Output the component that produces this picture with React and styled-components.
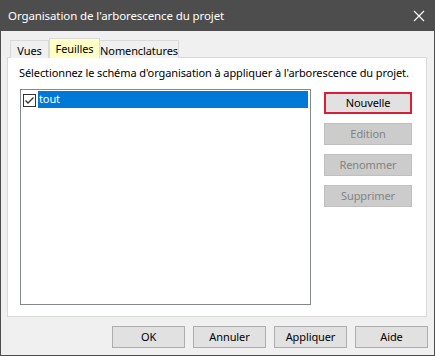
import React from "react";
import styled, { createGlobalStyle } from "styled-components";

const Global = createGlobalStyle`
  html, body { margin: 0; padding: 0; background: #f0f0f0; }
  body { font-family: "Noto Sans", "Open Sans", sans-serif; font-size: 11px; color: #000; letter-spacing: -0.1px; }
  * { box-sizing: border-box; }
`;

const Window = styled.div`
  width: 435px;
  height: 356px;
  display: flex;
  flex-direction: column;
  background: #f0f0f0;
  border: 1px solid #4d4d4d;
  border-top: none;
`;

const TitleBar = styled.div`
  height: 31px;
  flex: none;
  background: #4d4d4d;
  color: #fff;
  display: flex;
  align-items: center;
  justify-content: space-between;
  padding: 0 10px 0 8px;
  margin: 0 -1px;
  font-size: 11.5px;
`;

const CloseIcon = styled.svg`
  width: 12px;
  height: 12px;
  display: block;
`;

const Body = styled.div`
  flex: 1;
  display: flex;
  flex-direction: column;
  padding: 7px 7px 0 6px;
`;

const TabStrip = styled.div`
  display: flex;
  align-items: flex-end;
  height: 20px;
  margin: 0 0 -1px 3px;
  position: relative;
  z-index: 1;
`;

const Tab = styled.div`
  height: ${(p) => (p.$active ? "20px" : "18px")};
  width: ${(p) => p.$w}px;
  border: 1px solid #d9d9d9;
  border-bottom: none;
  border-left-width: ${(p) => (p.$first || p.$active ? 1 : 0)}px;
  background: ${(p) => (p.$active ? "#ffffc6" : "#f0f0f0")};
  display: flex;
  align-items: flex-start;
  justify-content: center;
  padding-top: 2px;
  font-size: 11px;
  line-height: 15px;
  white-space: nowrap;
`;

const Panel = styled.div`
  height: 260px;
  background: #fff;
  border: 1px solid #d9d9d9;
  padding: 7px 0 0 11px;
  display: flex;
  flex-direction: column;
`;

const Hint = styled.div`
  font-size: 11px;
  line-height: 15px;
  white-space: nowrap;
`;

const ListArea = styled.div`
  display: flex;
  gap: 13px;
  margin-top: 9px;
  margin-left: 1px;
`;

const ListBox = styled.div`
  width: 291px;
  height: 216px;
  border: 1px solid #828790;
  background: #fff;
  padding: 1px 2px 0 2px;
`;

const Row = styled.div`
  display: flex;
  align-items: center;
  height: 17px;
  gap: 2px;
`;

const CheckBox = styled.svg`
  width: 13px;
  height: 13px;
  flex: none;
  display: block;
  margin-top: 2px;
`;

const RowLabel = styled.div`
  flex: 1;
  height: 17px;
  background: ${(p) => (p.$selected ? "#0078d7" : "transparent")};
  color: ${(p) => (p.$selected ? "#fff" : "#000")};
  line-height: 16px;
  padding-left: 1px;
`;

const SideButtons = styled.div`
  display: flex;
  flex-direction: column;
  gap: 9px;
  padding-top: 3px;
`;

const Button = styled.button`
  font-family: inherit;
  font-size: 11px;
  letter-spacing: -0.1px;
  width: ${(p) => p.$w || 88}px;
  height: 22px;
  padding: 0;
  margin: 0;
  line-height: 18px;
  background: ${(p) => (p.$disabled ? "#cccccc" : "#e1e1e1")};
  color: ${(p) => (p.$disabled ? "#838383" : "#000")};
  border: ${(p) =>
    p.$default ? "2px solid #dc1e35" : p.$disabled ? "1px solid #bfbfbf" : "1px solid #adadad"};
  cursor: default;
`;

const Footer = styled.div`
  display: flex;
  justify-content: flex-end;
  gap: 8px;
  padding-top: 9px;
  margin-right: -1px;
`;

export default function App() {
  return (
    <>
      <Global />
      <Window>
        <TitleBar>
          <span>Organisation de l'arborescence du projet</span>
          <CloseIcon viewBox="0 0 12 12">
            <path d="M1 1 L11 11 M11 1 L1 11" stroke="#fff" strokeWidth="1.1" />
          </CloseIcon>
        </TitleBar>
        <Body>
          <TabStrip>
            <Tab $first $w={39}>Vues</Tab>
            <Tab $active $w={51}>Feuilles</Tab>
            <Tab $w={79}>Nomenclatures</Tab>
          </TabStrip>
          <Panel>
            <Hint>Sélectionnez le schéma d'organisation à appliquer à l'arborescence du projet.</Hint>
            <ListArea>
              <ListBox>
                <Row>
                  <CheckBox viewBox="0 0 13 13">
                    <rect x="0.5" y="0.5" width="12" height="12" fill="#fff" stroke="#333" />
                    <path d="M2.5 6.5 L5 9 L10.5 3.5" fill="none" stroke="#333" strokeWidth="1.3" />
                  </CheckBox>
                  <RowLabel $selected>tout</RowLabel>
                </Row>
              </ListBox>
              <SideButtons>
                <Button $default>Nouvelle</Button>
                <Button $disabled>Edition</Button>
                <Button $disabled>Renommer</Button>
                <Button $disabled>Supprimer</Button>
              </SideButtons>
            </ListArea>
          </Panel>
          <Footer>
            <Button $w={73}>OK</Button>
            <Button $w={73}>Annuler</Button>
            <Button $w={73}>Appliquer</Button>
            <Button $w={73}>Aide</Button>
          </Footer>
        </Body>
      </Window>
    </>
  );
}
